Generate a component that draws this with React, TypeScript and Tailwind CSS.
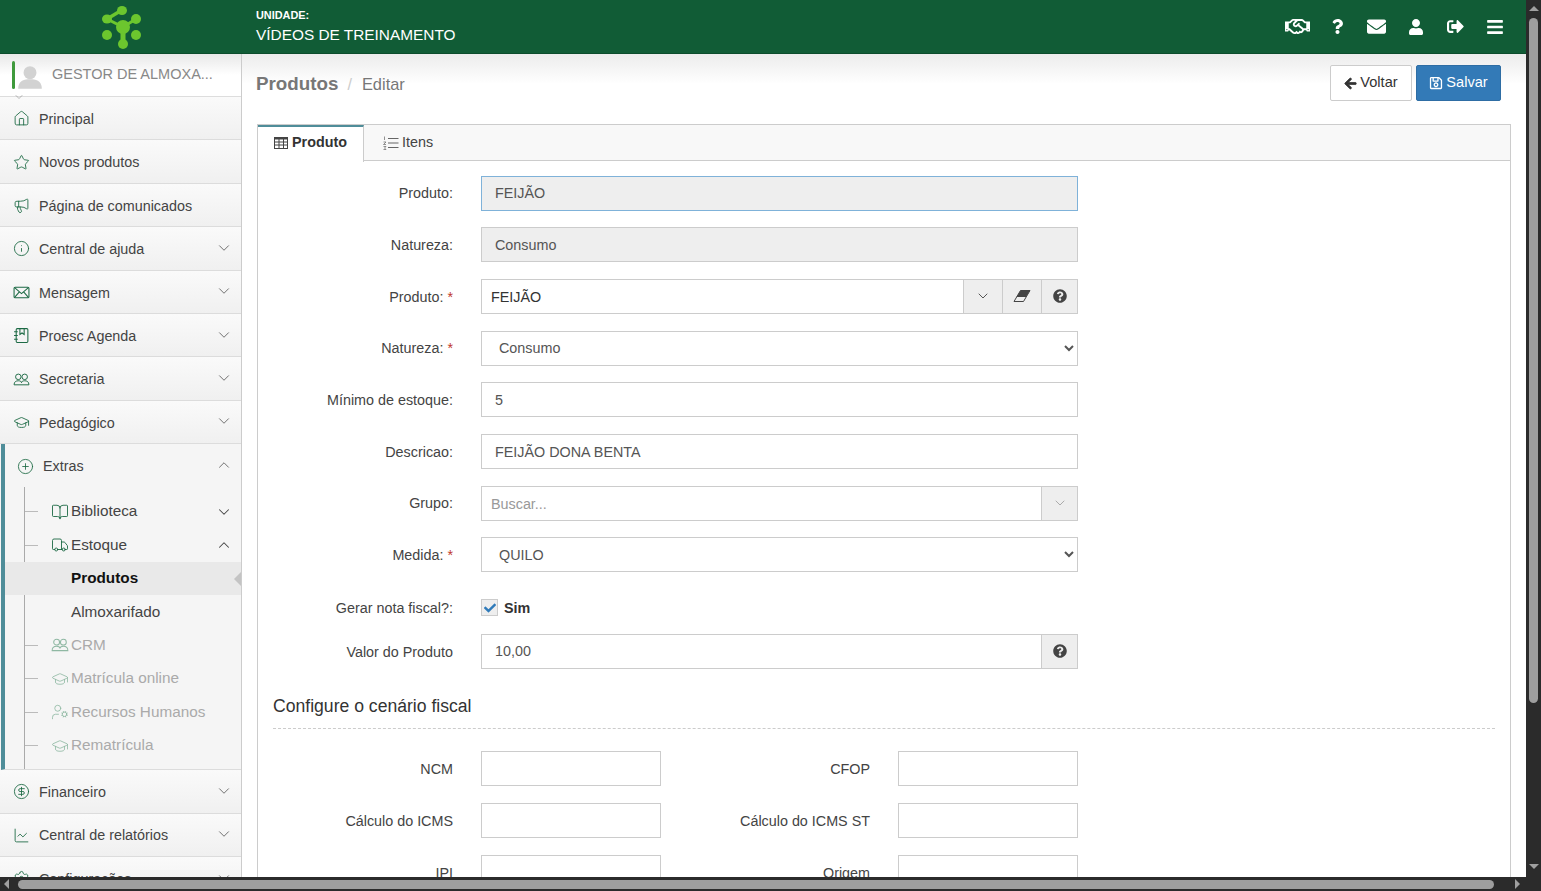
import type { ReactNode } from "react";
import {
  House,
  Star,
  Megaphone,
  Info,
  GraduationCap,
  CirclePlus,
  BookOpen,
  Truck,
  UserCog,
  CircleDollarSign,
  ChartLine,
  Settings,
  ChevronDown,
  ChevronUp,
} from "lucide-react";
import {
  FaRegHandshake,
  FaQuestion,
  FaEnvelope,
  FaUser,
  FaSignOutAlt,
  FaBars,
  FaArrowLeft,
  FaRegSave,
  FaQuestionCircle,
  FaCheck,
} from "react-icons/fa";

type IconProps = { size?: number; strokeWidth?: number; className?: string };

function MailIcon({ size = 16, className }: IconProps) {
  return (
    <svg width={size} height={size} viewBox="0 0 16 16" fill="none" stroke="currentColor" strokeWidth="1" className={className}>
      <rect x="1" y="3" width="14" height="10" rx="1" />
      <path d="M1.5 3.5 L8 9 L14.5 3.5 M1.5 12.5 L6 7.5 M14.5 12.5 L10 7.5" />
    </svg>
  );
}

function PeopleIcon({ size = 16, className }: IconProps) {
  return (
    <svg width={size} height={size} viewBox="0 0 16 16" fill="none" stroke="currentColor" strokeWidth="0.9" className={className}>
      <circle cx="5" cy="5.5" r="2.6" />
      <circle cx="11" cy="5.5" r="2.6" />
      <path d="M1 13 C1 10 3 9.2 5 9.2 C7 9.2 8 10 8 11 C8 10 9 9.2 11 9.2 C13 9.2 15 10 15 13 Z" />
    </svg>
  );
}

function AgendaIcon({ size = 16, className }: IconProps) {
  return (
    <svg width={size} height={size} viewBox="0 0 16 16" fill="none" stroke="currentColor" strokeWidth="1" className={className}>
      <rect x="3" y="1.5" width="11" height="13" rx="1" />
      <path d="M6.5 1.5 V7 L8.5 5.6 L10.5 7 V1.5 M1 4.5 H4.5 M1 8 H4.5 M1 11.5 H4.5" />
    </svg>
  );
}

const TOP_MENU = [
  { icon: House, label: "Principal" },
  { icon: Star, label: "Novos produtos" },
  { icon: Megaphone, label: "Página de comunicados" },
  { icon: Info, label: "Central de ajuda", more: true },
  { icon: MailIcon, label: "Mensagem", more: true },
  { icon: AgendaIcon, label: "Proesc Agenda", more: true },
  { icon: PeopleIcon, label: "Secretaria", more: true },
  { icon: GraduationCap, label: "Pedagógico", more: true },
];

const BOTTOM_MENU = [
  { icon: CircleDollarSign, label: "Financeiro", more: true },
  { icon: ChartLine, label: "Central de relatórios", more: true },
  { icon: Settings, label: "Configurações", more: true },
];

const MUTED_ITEMS = [
  { icon: PeopleIcon, label: "CRM" },
  { icon: GraduationCap, label: "Matrícula online" },
  { icon: UserCog, label: "Recursos Humanos" },
  { icon: GraduationCap, label: "Rematrícula" },
];

function Logo() {
  return (
    <svg width="44" height="46" viewBox="0 0 44 46" fill="none">
      <g stroke="#6cc62e" strokeWidth="3.5">
        <path d="M6 15 L21 6" />
        <path d="M35 15 L22 23 L6 15" strokeWidth="3" />
        <path d="M22 23 L22 39" strokeWidth="5" />
      </g>
      <g fill="#6cc62e">
        <ellipse cx="21" cy="6.5" rx="5" ry="4.5" />
        <ellipse cx="6" cy="15" rx="5" ry="4.5" />
        <circle cx="35" cy="15" r="5" />
        <circle cx="22" cy="23" r="7" />
        <circle cx="6" cy="31" r="5" />
        <circle cx="35" cy="31" r="5" />
        <circle cx="22" cy="40" r="5" />
      </g>
    </svg>
  );
}

function EraserIcon() {
  return (
    <svg width="18" height="14" viewBox="0 0 18 14" className="text-[#444]">
      <path d="M7.5 1.5 H17 L10.5 12.5 H1 Z" fill="none" stroke="currentColor" strokeWidth="1" />
      <path d="M7.5 1.5 H17 L13 8 H3.5 Z" fill="currentColor" />
    </svg>
  );
}

function TableIcon() {
  return (
    <svg width="14" height="12" viewBox="0 0 14 12" fill="none" stroke="#444" strokeWidth="1" className="shrink-0">
      <rect x="0.5" y="0.5" width="13" height="11" />
      <path d="M0.5 1.5 H13.5" strokeWidth="2" />
      <path d="M0.5 5 H13.5 M0.5 8 H13.5 M5 2 V11.5 M9.5 2 V11.5" />
    </svg>
  );
}

function ListIcon() {
  return (
    <svg width="16" height="14" viewBox="0 0 16 14" fill="none" stroke="#666" className="shrink-0">
      <path d="M5 2.5 H15.5 M5 7 H15.5 M5 11.5 H15.5" strokeWidth="1.2" />
      <path d="M1.5 0.5 V4 M0.5 6 H3 L0.5 8.5 H3 M0.5 10.5 H3 L1.5 12 L3 13.5 H0.5" strokeWidth="0.7" />
    </svg>
  );
}

function MenuRow({ icon: Icon, label, more }: { icon: (p: IconProps) => ReactNode; label: string; more?: boolean }) {
  return (
    <div className="flex h-[43.4px] shrink-0 items-center border-b border-[#dcdcdc] bg-gradient-to-b from-[#fafafa] to-[#f0f0f0] pl-[13px] pr-[8px] pt-[3px] text-[14.35px] text-[#444]">
      <Icon size={17} strokeWidth={1.25} className="shrink-0 -translate-y-[1px] text-[#1d6a45]" />
      <span className="ml-[9px] flex-1">{label}</span>
      {more && <ChevronDown size={18} strokeWidth={1.1} className="-translate-y-[2px] text-[#555]" />}
    </div>
  );
}

function SubRow({ children }: { children: ReactNode }) {
  return (
    <div className="flex h-[33.4px] items-center pr-[8px]">
      <div className="w-[13px] border-t border-[#bbb]" />
      {children}
    </div>
  );
}

function Sidebar() {
  return (
    <aside className="flex w-[242px] shrink-0 flex-col overflow-hidden border-r border-[#ccc] bg-[#f5f5f5]">
      <div className="relative flex h-[43px] shrink-0 items-center border-b border-[#ddd] bg-gradient-to-b from-[#e8e8e8] via-white to-white pl-[12px]">
        <div className="h-[28px] w-[3px] rounded-sm bg-[#3f9a3c]" />
        <svg width="28" height="28" viewBox="0 0 26 26" className="ml-[1px] mt-[4px]">
          <circle cx="13" cy="9" r="6" fill="#d2d2d2" />
          <path d="M2 24 C2 16 8 15 13 15 C18 15 24 16 24 24 Z" fill="#d2d2d2" />
        </svg>
        <span className="ml-[8px] text-[14.5px] text-[#888]">GESTOR DE ALMOXA...</span>
        <ChevronDown size={12} strokeWidth={1} className="absolute left-[13px] top-[37px] text-[#777]" />
      </div>

      {TOP_MENU.map((item) => (
        <MenuRow key={item.label} {...item} />
      ))}

      <div className="ml-px h-[326px] shrink-0 border-b border-l-4 border-[#dcdcdc] border-l-[#4f8d99]">
        <div className="flex h-[43px] items-center pl-[12px] pr-[8px] pt-[2px] text-[14.35px] text-[#444]">
          <CirclePlus size={17} strokeWidth={1.2} className="text-[#1d6a45]" />
          <span className="ml-[9px] flex-1">Extras</span>
          <ChevronUp size={18} strokeWidth={1.1} className="-translate-y-[2px] text-[#555]" />
        </div>
        <div className="ml-[19px] h-[282px] border-l border-[#aaa] pt-[8px] text-[15.3px] text-[#444]">
          <SubRow>
            <BookOpen size={18} strokeWidth={1.2} className="ml-[13px] text-[#1d6a45]" />
            <span className="ml-[2px] flex-1">Biblioteca</span>
            <ChevronDown size={18} strokeWidth={1.4} className="text-[#444]" />
          </SubRow>
          <SubRow>
            <Truck size={18} strokeWidth={1.2} className="ml-[13px] text-[#1d6a45]" />
            <span className="ml-[2px] flex-1">Estoque</span>
            <ChevronUp size={18} strokeWidth={1.4} className="text-[#444]" />
          </SubRow>
          {/* the selected row paints over the tree line */}
          <div className="relative -ml-[20px] flex h-[33.4px] items-center bg-[#e9e9e9] pl-[66px]">
            <span className="flex-1 font-bold text-[#111]">Produtos</span>
            <span className="h-0 w-0 border-y-[7px] border-r-[7px] border-y-transparent border-r-[#c4c4c4]" />
          </div>
          <div className="flex h-[33.4px] items-center pl-[46px]">Almoxarifado</div>
          {MUTED_ITEMS.map(({ icon: Icon, label }) => (
            <SubRow key={label}>
              <Icon size={18} strokeWidth={1.1} className="ml-[13px] text-[#8fb8a3]" />
              <span className="ml-[2px] text-[#aaa]">{label}</span>
            </SubRow>
          ))}
        </div>
      </div>

      {BOTTOM_MENU.map((item) => (
        <MenuRow key={item.label} {...item} />
      ))}
    </aside>
  );
}

function AddonButton({ children, w = "w-[36px]" }: { children: ReactNode; w?: string }) {
  return (
    <div className={`flex h-full shrink-0 items-center justify-center border border-l-0 border-[#ccc] bg-[#eee] ${w}`}>
      {children}
    </div>
  );
}

function Row({ label, required, children, className = "mt-[16.7px]" }: { label: string; required?: boolean; children: ReactNode; className?: string }) {
  return (
    <div className={`flex h-[35px] items-center ${className}`}>
      <div className="w-[195px] shrink-0 pt-[2px] text-right text-[14.35px] text-[#444]">
        {label}
        {required && <span className="text-[#c0392b]"> *</span>}
      </div>
      <div className="ml-[28px] flex h-full w-[597px]">{children}</div>
    </div>
  );
}

const fieldClass = "h-full w-full border border-[#ccc] bg-white px-[13px] text-[14.35px] leading-[34px] text-[#555]";

function FiscalRow({ left, right }: { left: string; right: string }) {
  return (
    <div className="mb-[17px] flex h-[35px] items-center text-[14.35px] text-[#444]">
      <div className="w-[195px] shrink-0 pt-[3px] text-right">{left}</div>
      <div className="ml-[28px] h-full w-[180px] border border-[#ccc] bg-white" />
      <div className="w-[209px] shrink-0 pt-[3px] text-right">{right}</div>
      <div className="ml-[28px] h-full w-[180px] border border-[#ccc] bg-white" />
    </div>
  );
}

function ProductForm() {
  return (
    <div className="mx-[15px] mt-[23px] h-[800px] border border-[#ccc]">
      <div className="flex h-[36px] border-b border-[#ccc] bg-[#f8f8f8]">
        <div className="-mb-px flex h-[37px] w-[106px] items-center justify-center gap-[4px] border-r border-t-2 border-r-[#ccc] border-t-[#4f8d99] bg-white pb-[3px] text-[14.35px] font-bold text-[#333]">
          <TableIcon />
          Produto
        </div>
        <div className="ml-[19px] flex items-center gap-[3px] text-[14.35px] text-[#444]">
          <ListIcon />
          Itens
        </div>
      </div>

      <div className="pt-[14.5px]">
        <Row label="Produto:" className="">
          <div className="h-full w-full border border-[#7fb2d9] bg-[#eee] px-[13px] text-[14.35px] leading-[33px] text-[#555]">FEIJÃO</div>
        </Row>
        <Row label="Natureza:">
          <div className="h-full w-full border border-[#ccc] bg-[#eee] px-[13px] text-[14.35px] leading-[34px] text-[#555]">Consumo</div>
        </Row>
        <Row label="Produto:" required>
          <div className="h-full flex-1 border border-[#ccc] bg-white px-[9px] text-[14.35px] leading-[34px] text-[#333]">FEIJÃO</div>
          <AddonButton w="w-[39px]"><ChevronDown size={16} strokeWidth={1.5} className="text-[#555]" /></AddonButton>
          <AddonButton w="w-[39px]"><EraserIcon /></AddonButton>
          <AddonButton><FaQuestionCircle size={14} className="text-[#444]" /></AddonButton>
        </Row>
        <Row label="Natureza:" required>
          <select defaultValue="Consumo" className="h-full w-full border border-[#ccc] bg-white px-[13px] text-[14.35px] text-[#555]">
            <option>Consumo</option>
          </select>
        </Row>
        <Row label="Mínimo de estoque:">
          <div className={fieldClass}>5</div>
        </Row>
        <Row label="Descricao:">
          <div className={fieldClass}>FEIJÃO DONA BENTA</div>
        </Row>
        <Row label="Grupo:">
          <div className="h-full flex-1 border border-[#ccc] bg-white px-[9px] text-[14.35px] leading-[34px] text-[#999]">Buscar...</div>
          <AddonButton><ChevronDown size={16} strokeWidth={1.2} className="text-[#999]" /></AddonButton>
        </Row>
        <Row label="Medida:" required>
          <select defaultValue="QUILO" className="h-full w-full border border-[#ccc] bg-white px-[13px] text-[14.35px] text-[#555]">
            <option>QUILO</option>
          </select>
        </Row>
        <div className="mt-[18px] flex h-[35px] items-center">
          <div className="w-[195px] shrink-0 pt-[2px] text-right text-[14.35px] text-[#444]">Gerar nota fiscal?:</div>
          <div className="ml-[28px] flex h-[17px] w-[17px] items-center justify-center border border-[#ccc] bg-[#eee]">
            <FaCheck size={12} className="text-[#2f7ab9]" />
          </div>
          <span className="ml-[6px] pt-[1px] text-[14.35px] font-bold text-[#333]">Sim</span>
        </div>
        <Row label="Valor do Produto" className="mt-[8.5px]">
          <div className="h-full flex-1 border border-[#ccc] bg-white px-[13px] text-[14.35px] leading-[33px] text-[#555]">10,00</div>
          <AddonButton><FaQuestionCircle size={14} className="text-[#444]" /></AddonButton>
        </Row>

        <div className="mx-[15px] mt-[25px] h-[35px] border-b border-dashed border-[#ccc] text-[17.6px] leading-[25px] text-[#333]">
          Configure o cenário fiscal
        </div>
        <div className="mt-[22px]">
          <FiscalRow left="NCM" right="CFOP" />
          <FiscalRow left="Cálculo do ICMS" right="Cálculo do ICMS ST" />
          <FiscalRow left="IPI" right="Origem" />
        </div>
      </div>
    </div>
  );
}

function Triangle({ dir }: { dir: "up" | "down" | "left" | "right" }) {
  const cls = {
    up: "border-x-[5px] border-b-[5px] border-x-transparent border-b-[#a0a0a0]",
    down: "border-x-[5px] border-t-[5px] border-x-transparent border-t-[#a0a0a0]",
    left: "border-y-[5px] border-r-[5px] border-y-transparent border-r-[#a0a0a0]",
    right: "border-y-[5px] border-l-[5px] border-y-transparent border-l-[#a0a0a0]",
  }[dir];
  return <span className={`block h-0 w-0 shrink-0 ${cls}`} />;
}

export default function App() {
  return (
    <div className="flex h-[891px] w-[1541px] overflow-hidden bg-[#2b2b2b] font-['Liberation_Sans',Arial,sans-serif]">
      <div className="flex w-[1526px] shrink-0 flex-col">
        <div className="flex h-[877px] shrink-0 flex-col overflow-hidden bg-white">
          <header className="flex h-[54px] shrink-0 items-center border-b border-[#0c4c2c] bg-[#115c36] text-white">
            <div className="flex w-[242px] shrink-0 justify-center pl-[4px]">
              <Logo />
            </div>
            <div className="ml-[14px] flex-1">
              <div className="text-[10.9px] font-bold leading-[13px]">UNIDADE:</div>
              <div className="mt-[4px] text-[15.4px] leading-[18px]">VÍDEOS DE TREINAMENTO</div>
            </div>
            <div className="flex items-center pr-[11px]">
              <div className="flex w-[39px] justify-center"><FaRegHandshake size={25} /></div>
              <div className="flex w-[40px] justify-center"><FaQuestion size={15} /></div>
              <div className="flex w-[39px] justify-center"><FaEnvelope size={19} /></div>
              <div className="flex w-[39px] justify-center"><FaUser size={16} /></div>
              <div className="flex w-[40px] justify-center"><FaSignOutAlt size={17} /></div>
              <div className="flex w-[40px] justify-center"><FaBars size={18} /></div>
            </div>
          </header>

          <div className="flex min-h-0 flex-1">
            <Sidebar />
            <main className="min-w-0 flex-1 overflow-hidden bg-gradient-to-b from-[#ececec] from-0% to-white to-[30px]">
              <div className="flex h-[47px] items-end justify-between pl-[14px] pr-[25px]">
                <div className="flex items-baseline pb-[3px]">
                  <span className="text-[18.8px] font-bold text-[#777]">Produtos</span>
                  <span className="ml-[9px] text-[16.2px] text-[#ccc]">/</span>
                  <span className="ml-[10px] text-[16.4px] text-[#777]">Editar</span>
                </div>
                <div className="flex gap-[4px]">
                  <div className="flex h-[36px] w-[82px] items-center justify-center gap-[3px] rounded-[2px] border border-[#ccc] bg-white text-[14.6px] text-[#333]">
                    <FaArrowLeft size={13} className="stroke-[#333] stroke-[30px]" />
                    Voltar
                  </div>
                  <div className="flex h-[36px] w-[85px] items-center justify-center gap-[3px] rounded-[2px] border border-[#2e6da4] bg-[#337ab7] text-[14.6px] text-white">
                    <FaRegSave size={14} />
                    Salvar
                  </div>
                </div>
              </div>
              <ProductForm />
            </main>
          </div>
        </div>

        {/* horizontal browser scrollbar */}
        <div className="flex h-[14px] items-center px-[4px]">
          <Triangle dir="left" />
          <div className="ml-[9px] h-[9px] w-[1476px] rounded-full bg-[#9e9e9e]" />
          <div className="flex-1" />
          <Triangle dir="right" />
          <div className="w-[2px]" />
        </div>
      </div>

      {/* vertical browser scrollbar */}
      <div className="flex w-[15px] shrink-0 flex-col items-center pt-[6px]">
        <Triangle dir="up" />
        <div className="mt-[7px] h-[685px] w-[9px] rounded-full bg-[#9e9e9e]" />
        <div className="flex-1" />
        <div className="mb-[22px]"><Triangle dir="down" /></div>
      </div>
    </div>
  );
}
